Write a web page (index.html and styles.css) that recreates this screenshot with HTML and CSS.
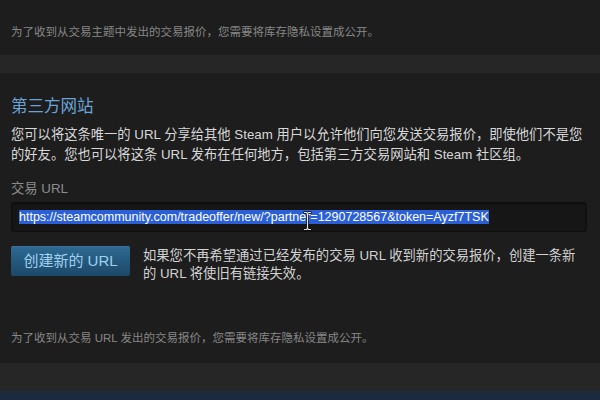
FILE: index.html
```html
<!DOCTYPE html>
<html lang="zh-CN">
<head>
<meta charset="utf-8">
<title>交易 URL</title>
<link rel="stylesheet" href="styles.css">
</head>
<body>
<div class="page">
  <section class="panel panel-top">
    <p class="note">为了收到从交易主题中发出的交易报价，您需要将库存隐私设置成公开。</p>
  </section>
  <section class="panel panel-main">
    <h2 class="title">第三方网站</h2>
    <p class="desc">您可以将这条唯一的 URL 分享给其他 Steam 用户以允许他们向您发送交易报价，即使他们不是您的好友。您也可以将这条 URL 发布在任何地方，包括第三方交易网站和 Steam 社区组。</p>
    <div class="label">交易 URL</div>
    <div class="url-box">
      <span class="url-sel">https://steamcommunity.com/tradeoffer/new/?partner=1290728567&amp;token=Ayzf7TSK</span>
      <svg class="cursor" width="9" height="20" viewBox="0 0 9 20" aria-hidden="true">
        <path d="M1.5 1.5 H3.5 L4.5 2.5 L5.5 1.5 H7.5 M4.5 2.5 V17.5 M1.5 18.5 H3.5 L4.5 17.5 L5.5 18.5 H7.5" fill="none" stroke="#111" stroke-width="2.6" stroke-linecap="round"/>
        <path d="M1.5 1.5 H3.5 L4.5 2.5 L5.5 1.5 H7.5 M4.5 2.5 V17.5 M1.5 18.5 H3.5 L4.5 17.5 L5.5 18.5 H7.5" fill="none" stroke="#e8e8e8" stroke-width="1.1" stroke-linecap="round"/>
      </svg>
    </div>
    <div class="action-row">
      <button class="btn-new" type="button">创建新的 URL</button>
      <p class="action-text">如果您不再希望通过已经发布的交易 URL 收到新的交易报价，创建一条新的 URL 将使旧有链接失效。</p>
    </div>
    <p class="note note-bottom">为了收到从交易 URL 发出的交易报价，您需要将库存隐私设置成公开。</p>
  </section>
  <footer class="footer"></footer>
</div>
</body>
</html>
```

FILE: styles.css
```css
html, body {
  margin: 0;
  padding: 0;
  background: #262626;
}
body {
  font-family: "Liberation Sans", "Noto Sans CJK SC", sans-serif;
  width: 600px;
  height: 400px;
  overflow: hidden;
}
.page {
  display: flex;
  flex-direction: column;
  gap: 18px;
}
.panel {
  background: #1d1d1d;
  padding: 0 13px 0 11px;
}
.panel-top {
  padding-top: 24px;
  padding-bottom: 15px;
  border-top: 1px solid #232323;
  margin-top: -1px;
}
.note {
  margin: 0;
  font-size: 11.5px;
  line-height: 16px;
  color: #878787;
}
.panel-main {
  padding-top: 21px;
  padding-bottom: 17px;
}
.title {
  margin: 0;
  font-weight: normal;
  font-size: 16.5px;
  line-height: 24px;
  color: #6aa3d6;
}
.desc {
  margin: 7px 0 0;
  font-size: 13.3px;
  line-height: 20px;
  color: #d8d8d8;
}
.label {
  margin-top: 14px;
  font-size: 13.3px;
  line-height: 20px;
  color: #8c8c8c;
}
.url-box {
  position: relative;
  margin-top: 3px;
  height: 30px;
  box-sizing: border-box;
  border: 1px solid #0f0f0f;
  border-radius: 3px;
  background: #161616;
  box-shadow: inset 0 1px 2px rgba(0,0,0,0.4);
  padding: 6px 7px 0;
  font-size: 12.5px;
  line-height: 17px;
}
.url-sel {
  background: #2a5fd6;
  color: #ffffff;
  white-space: nowrap;
}
.cursor {
  position: absolute;
  left: 291px;
  top: 8px;
}
.action-row {
  display: flex;
  align-items: flex-start;
  gap: 13px;
  margin-top: 14px;
}
.btn-new {
  flex: none;
  width: 119px;
  height: 30px;
  margin: 0;
  padding: 0;
  border: none;
  border-radius: 2px;
  background: linear-gradient(to bottom, #2d6a93 0%, #1c4868 100%);
  box-shadow: inset 0 1px 0 rgba(255,255,255,0.06);
  color: #9fd0ee;
  font-family: "Liberation Sans", "Noto Sans CJK SC", sans-serif;
  font-size: 15px;
  line-height: 30px;
}
.action-text {
  margin: 1px 0 0;
  font-size: 13.3px;
  line-height: 18px;
  color: #d2d2d2;
}
.note-bottom {
  margin-top: 47px;
}
.footer {
  height: 10px;
  margin-top: 10px;
  background: #1b2a3c;
}
```
